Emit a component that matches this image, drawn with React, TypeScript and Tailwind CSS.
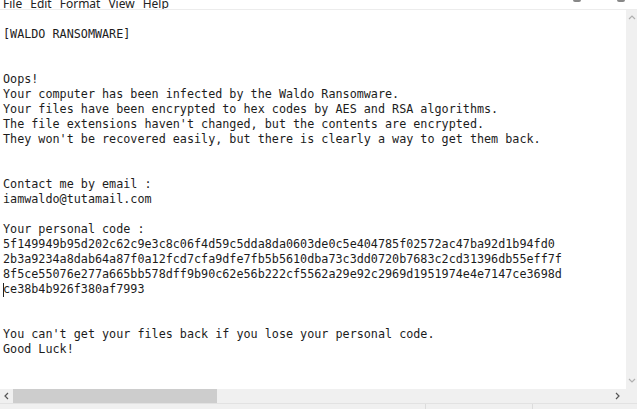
const noteLines = [
  '[WALDO RANSOMWARE]',
  '',
  '',
  'Oops!',
  'Your computer has been infected by the Waldo Ransomware.',
  'Your files have been encrypted to hex codes by AES and RSA algorithms.',
  "The file extensions haven't changed, but the contents are encrypted.",
  "They won't be recovered easily, but there is clearly a way to get them back.",
  '',
  '',
  'Contact me by email :',
  'iamwaldo@tutamail.com',
  '',
  'Your personal code :',
  '5f149949b95d202c62c9e3c8c06f4d59c5dda8da0603de0c5e404785f02572ac47ba92d1b94fd0',
  '2b3a9234a8dab64a87f0a12fcd7cfa9dfe7fb5b5610dba73c3dd0720b7683c2cd31396db55eff7f',
  '8f5ce55076e277a665bb578dff9b90c62e56b222cf5562a29e92c2969d1951974e4e7147ce3698d',
  'CARET',
  '',
  '',
  "You can't get your files back if you lose your personal code.",
  'Good Luck!',
]

const menus = ['File', 'Edit', 'Format', 'View', 'Help']

function Chevron({ dir, className }: { dir: 'up' | 'down' | 'left' | 'right'; className?: string }) {
  const d = {
    up: 'M1 5 L4 2 L7 5',
    down: 'M1 2 L4 5 L7 2',
    left: 'M5 1 L2 4 L5 7',
    right: 'M2 1 L5 4 L2 7',
  }[dir]
  return (
    <svg width="8" height="8" viewBox="0 0 8 8" className={className}>
      <path d={d} fill="none" stroke="currentColor" strokeWidth="1.2" />
    </svg>
  )
}

export default function App() {
  return (
    <div className="w-[637px] h-[409px] bg-white flex flex-col overflow-hidden">
      {/* Menu bar, cut off at the top */}
      <div className="h-[9px] shrink-0 overflow-hidden flex items-end border-b border-[#ececec] box-content relative">
        <div
          className="flex gap-[8px] pl-[3px] text-[12px] leading-[14px] text-[#222] mb-[-2px]"
          style={{ fontFamily: '"Noto Sans", "Liberation Sans", sans-serif' }}
        >
          {menus.map((m) => (
            <span key={m}>{m}</span>
          ))}
        </div>
        <div className="absolute top-0 left-[573px] w-[8px] h-[2px] bg-[#888] rounded-b" />
        <div className="absolute top-0 left-[617px] w-[8px] h-[2px] bg-[#888] rounded-b" />
      </div>

      {/* Editor */}
      <div className="flex-1 flex min-h-0">
        <div
          className="flex-1 pl-[3px] pt-[17px] text-[11.75px] leading-[15px] text-[#1c1c1c] whitespace-pre overflow-hidden"
          style={{ fontFamily: '"DejaVu Sans Mono", "Liberation Mono", monospace' }}
        >
          {noteLines.map((line, i) =>
            line === 'CARET' ? (
              <div key={i} className="h-[15px] flex items-center">
                <span className="w-px h-[14px] bg-[#222] mr-[-1px]" />
                <span>ce38b4b926f380af7993</span>
              </div>
            ) : (
              <div key={i} className="h-[15px]">
                {line}
              </div>
            )
          )}
        </div>
        <div className="w-[11px] shrink-0 bg-[#f0f0f0] flex flex-col items-center justify-between py-[4px] text-[#b0b0b0]">
          <Chevron dir="up" />
          <Chevron dir="down" />
        </div>
      </div>

      {/* Horizontal scrollbar */}
      <div className="h-[14px] shrink-0 bg-[#f0f0f0] flex items-center">
        <div className="w-[13px] flex justify-center text-[#555]">
          <Chevron dir="left" />
        </div>
        <div className="w-[204px] h-full bg-[#cdcdcd]" />
        <div className="flex-1" />
        <div className="w-[13px] flex justify-center text-[#555] mr-[13px]">
          <Chevron dir="right" />
        </div>
      </div>

      {/* Status bar */}
      <div className="h-[6px] shrink-0 bg-[#f0f0f0] border-t border-[#e2e2e2] flex">
        <div className="w-[426px] border-r border-[#dcdcdc]" />
        <div className="w-[107px] border-r border-[#dcdcdc]" />
        <div className="flex-1" />
      </div>
    </div>
  )
}
